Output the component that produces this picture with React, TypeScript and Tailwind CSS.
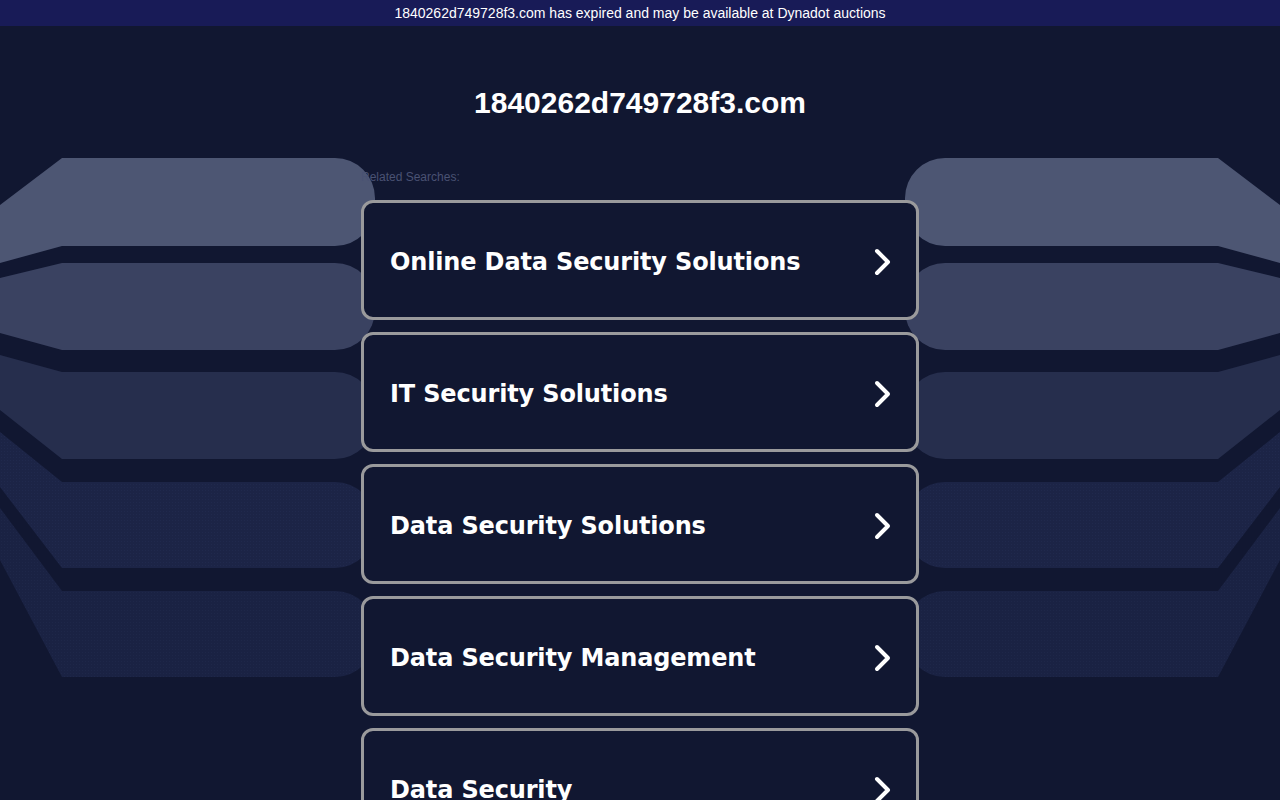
const SEARCHES = [
  'Online Data Security Solutions',
  'IT Security Solutions',
  'Data Security Solutions',
  'Data Security Management',
  'Data Security',
]

// left-hand ribbons; the right side is the same drawing mirrored
const RIBBONS = [
  { top: [205, 158], bottom: [246, 263], fill: '#4d5673' },
  { top: [278, 263], bottom: [350, 333], fill: '#3a4261' },
  { top: [355, 372], bottom: [459, 410], fill: '#262e4d' },
  { top: [432, 482], bottom: [568, 487], fill: 'url(#dots4)' },
  { top: [508, 591], bottom: [677, 560], fill: 'url(#dots5)' },
]

function Ribbons({ className }: { className: string }) {
  return (
    <svg className={className} width="380" height="800" viewBox="0 0 380 800">
      <defs>
        <pattern id="dots4" width="3" height="3" patternUnits="userSpaceOnUse">
          <rect width="3" height="3" fill="#1c2446" />
          <rect x="1" y="1" width="1" height="1" fill="#20294d" />
        </pattern>
        <pattern id="dots5" width="3" height="3" patternUnits="userSpaceOnUse">
          <rect width="3" height="3" fill="#1a2243" />
          <rect x="1" y="1" width="1" height="1" fill="#1e2749" />
        </pattern>
      </defs>
      {RIBBONS.map((r, i) => {
        const [y0, yTop] = r.top
        const [yBot, y1] = r.bottom
        const rad = 40
        const d = `M0,${y0} L62,${yTop} L${375 - rad},${yTop} A${rad},${rad} 0 0 1 375,${yTop + rad} L375,${yBot - rad} A${rad},${rad} 0 0 1 ${375 - rad},${yBot} L62,${yBot} L0,${y1} Z`
        return <path key={i} d={d} fill={r.fill} />
      })}
    </svg>
  )
}

function Chevron() {
  return (
    <svg width="22" height="30" viewBox="0 0 22 30" className="shrink-0">
      <path d="M5 4 L16 15 L5 26" fill="none" stroke="#ffffff" strokeWidth="4" strokeLinecap="round" strokeLinejoin="round" />
    </svg>
  )
}

export default function App() {
  return (
    <div className="relative h-[800px] overflow-hidden bg-[#111731] font-['Liberation_Sans',Arial,sans-serif]">
      <Ribbons className="pointer-events-none absolute left-0 top-0" />
      <Ribbons className="pointer-events-none absolute right-0 top-0 -scale-x-100" />

      <div className="relative h-[26px] bg-[#181b57] text-center text-[14px] leading-[26px] text-white">
        1840262d749728f3.com has expired and may be available at Dynadot auctions
      </div>

      <main className="relative mx-auto w-[558px]">
        <h1 className="pt-[59px] text-center text-[30px] font-bold leading-[36px] text-white">
          1840262d749728f3.com
        </h1>
        <p className="mt-[48px] mb-[15px] text-[12px] leading-[16px] text-[#4a5273]">Related Searches:</p>

        <div className="flex flex-col gap-[12px]">
          {SEARCHES.map((s) => (
            <a
              key={s}
              href="#"
              className="flex h-[120px] items-center justify-between rounded-[12px] border-[3px] border-[#9a9a9c] bg-[#111731] pl-[26px] pr-[22px] pt-[3px]"
            >
              <span className="font-['DejaVu_Sans',Verdana,sans-serif] text-[24px] font-bold tracking-[-0.15px] text-white">
                {s}
              </span>
              <Chevron />
            </a>
          ))}
        </div>
      </main>
    </div>
  )
}
